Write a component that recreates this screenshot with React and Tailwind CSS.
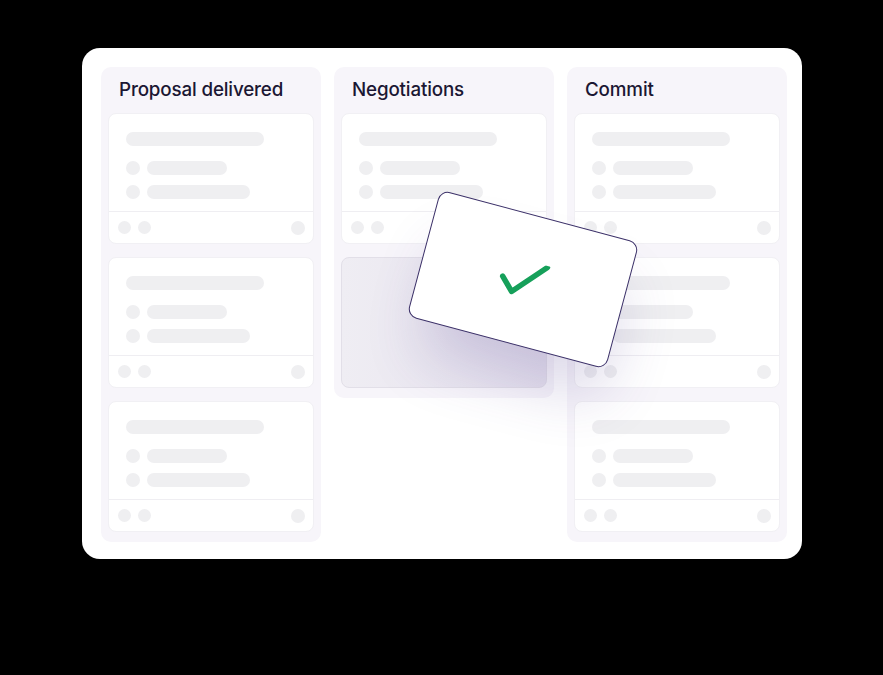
import React from "react";

function Card({ className = "" }) {
  return (
    <div className={"w-[206px] h-[131px] rounded-[8px] bg-white border border-[#f1f0f4] flex flex-col " + className}>
      <div className="flex-1 px-[17px] pt-[18px]">
        <div className="h-[14px] w-[138px] rounded-full bg-[#efeff1]" />
        <div className="mt-[15px] flex items-center gap-[7px]">
          <div className="h-[14px] w-[14px] rounded-full bg-[#efeff1]" />
          <div className="h-[14px] w-[80px] rounded-full bg-[#efeff1]" />
        </div>
        <div className="mt-[10px] flex items-center gap-[7px]">
          <div className="h-[14px] w-[14px] rounded-full bg-[#efeff1]" />
          <div className="h-[14px] w-[103px] rounded-full bg-[#efeff1]" />
        </div>
      </div>
      <div className="h-[32px] border-t border-[#efeef2] flex items-center pl-[9px] pr-[8px]">
        <div className="h-[13px] w-[13px] rounded-full bg-[#efeff1]" />
        <div className="ml-[7px] h-[13px] w-[13px] rounded-full bg-[#efeff1]" />
        <div className="ml-auto h-[14px] w-[14px] rounded-full bg-[#efeff1]" />
      </div>
    </div>
  );
}

function Column({ title, children }) {
  return (
    <div className="w-[220px] shrink-0 rounded-[10px] bg-[#f7f5fa] px-[7px] pb-[10px]">
      <div className="h-[46px] flex items-center pl-[11px] text-[18.8px] font-medium text-[#1b1733] tracking-[-0.15px]">
        {title}
      </div>
      <div className="flex flex-col gap-[13px]">{children}</div>
    </div>
  );
}

export default function App() {
  return (
    <div className="w-[883px] h-[675px] bg-black pt-[48px] pl-[82px]" style={{ fontFamily: "Inter, 'Noto Sans', sans-serif" }}>
      <div className="relative w-[720px] h-[511px] rounded-[18px] bg-white pl-[19px] pt-[19px]">
        <div className="flex items-start gap-[13px]">
          <Column title="Proposal delivered">
            <Card />
            <Card />
            <Card />
          </Column>
          <Column title="Negotiations">
            <Card />
            <div className="w-[206px] h-[131px] rounded-[8px] border border-[#e2dfe8] bg-gradient-to-r from-[#efedf3] to-[#e6e2ee]" />
          </Column>
          <Column title="Commit">
            <Card />
            <Card />
            <Card />
          </Column>
        </div>
        <div className="absolute left-[338px] top-[166px] w-[206px] h-[131px] rotate-[15deg] rounded-[10px] border border-[#3b3068] bg-white shadow-[10px_40px_60px_-10px_rgba(76,56,140,0.2)] flex items-center justify-center">
          <svg width="48" height="40" viewBox="-24 -20 48 40" fill="none">
            <path d="M-20.5 1.5 L-8 14 L20.5 -18.5" stroke="#16a05a" strokeWidth="5.5" strokeLinecap="round" strokeLinejoin="round" />
          </svg>
        </div>
      </div>
    </div>
  );
}
